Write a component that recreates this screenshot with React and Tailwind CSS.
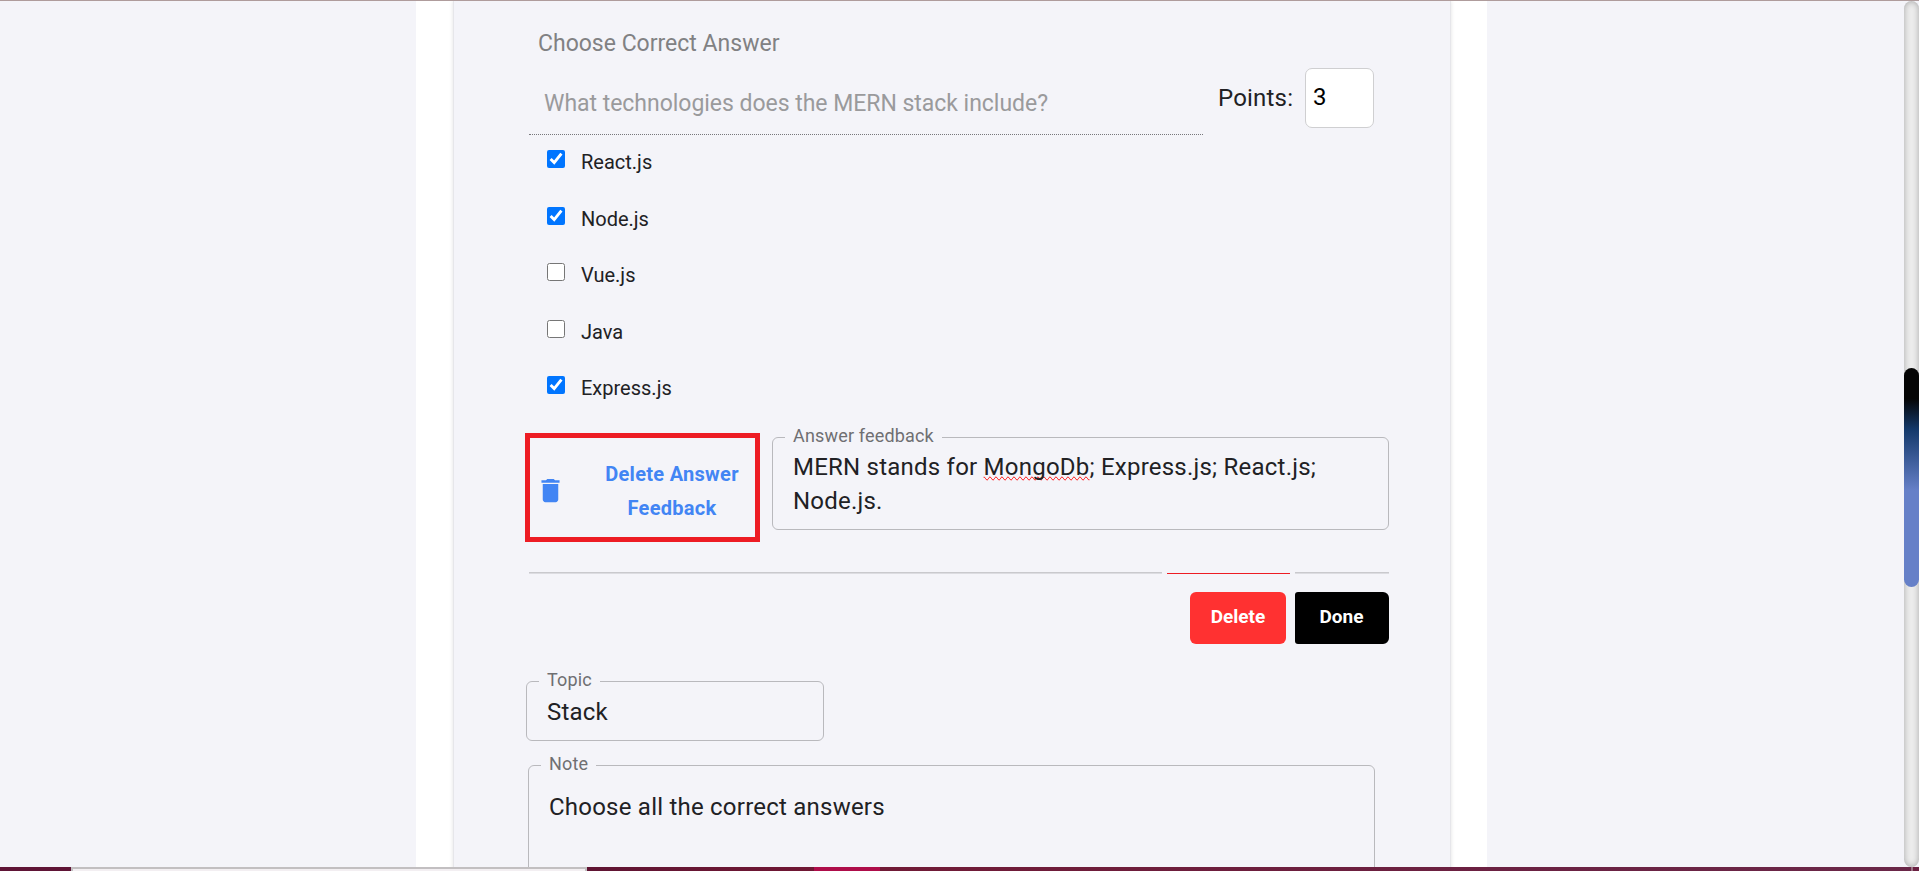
import React from "react";

const options = [
  { label: "React.js", checked: true },
  { label: "Node.js", checked: true },
  { label: "Vue.js", checked: false },
  { label: "Java", checked: false },
  { label: "Express.js", checked: true },
];

function Outlined({ label, legendClass, className, children }) {
  return (
    <fieldset className={`min-w-0 rounded-[6px] border border-[#b9b9bd] text-[24px] leading-[34px] tracking-[0.225px] text-[#212124] ${className}`}>
      <legend className={`h-[25px] text-[18px] leading-[22px] tracking-[0.17px] text-[#6f6f72] ${legendClass}`}>{label}</legend>
      {children}
    </fieldset>
  );
}

function TrashIcon() {
  return (
    <svg viewBox="0 0 24 24" className="mt-[9px] h-[31px] w-[31px] shrink-0 fill-[#4285f4]">
      <path d="M6 19c0 1.100.9 2 2 2h8c1.100 0 2-.9 2-2V7H6v12zM19 4h-3.500l-1-1h-5l-1 1H5v2h14V4z" />
    </svg>
  );
}

export default function App() {
  return (
    <div className="flex h-[871px] w-[1919px] flex-col overflow-hidden bg-[#f4f4f9] font-[Roboto,sans-serif]">
      <div className="h-px shrink-0 bg-[#af9c9c]" />
      <div className="flex h-[866px] shrink-0 overflow-hidden">
        <div className="w-[416px] shrink-0" />
        <main className="h-[866px] w-[1071px] shrink-0 bg-white pl-[37px]">
          <section className="h-[900px] w-[998px] border-x border-[#e6e6ea] bg-[#f4f4f9] shadow-[0_0_4px_rgba(0,0,0,0.12)]">
            <h2 className="ml-[84px] pt-[29px] text-[23px] leading-[28px] text-[#818183]">Choose Correct Answer</h2>

            <div className="ml-[75px] mt-[10px] flex h-[67px]">
              <div className="h-[67px] w-[674px] border-b border-dotted border-[#77777b] pl-[15px] pt-[22px] text-[23px] leading-[28px] tracking-[-0.03px] text-[#9a9a9c]">
                What technologies does the MERN stack include?
              </div>
              <label className="ml-[15px] w-[87px] whitespace-nowrap pt-[16px] text-[24px] leading-[28px] tracking-[0.2px] text-[#212124]">Points:</label>
              <div className="h-[60px] w-[69px] rounded-[7px] border border-[#cfcfd1] bg-white pl-[7px] pt-[14px] text-[24px] leading-[28px] text-black">3</div>
            </div>

            <div className="ml-[93px] mt-[15px] flex h-[283px] flex-col">
              {options.map((o) => (
                <label key={o.label} className="flex h-[56.5px] items-start text-[20px] leading-[24px] text-[#212124]">
                  <input type="checkbox" defaultChecked={o.checked} className="m-0 h-[18px] w-[18px] shrink-0" />
                  <span className="ml-[16px]">{o.label}</span>
                </label>
              ))}
            </div>

            <div className="ml-[71px] -mt-[8px] flex">
              <button className="mt-[8px] flex h-[109px] w-[235px] border-[5px] border-[#ed1c24] pl-[5px] pt-[28px] text-[20px] font-bold leading-[34px] text-[#4285f4]">
                <TrashIcon />
                <span className="-mt-[9px] ml-[29px] w-[154px] text-center tracking-[0.28px]">Delete Answer Feedback</span>
              </button>
              <Outlined label="Answer feedback" legendClass="ml-[12px] px-[8px]" className="ml-[12px] h-[105px] w-[617px]">
                <p className="ml-[20px] w-[540px]">
                  MERN stands for <span className="[text-decoration-line:spelling-error]">MongoDb</span>; Express.js; React.js;
                  <br />
                  Node.js.
                </p>
              </Outlined>
            </div>

            <div className="ml-[75px] mt-[30px] flex h-[2px] items-end">
              <div className="h-[2px] w-[633px] border-t border-[#c9c9cd] bg-[#dcdce1]" />
              <div className="ml-[5px] h-px w-[123px] bg-[#ed1c24]" />
              <div className="ml-[5px] h-[2px] w-[94px] border-t border-[#c9c9cd] bg-[#dcdce1]" />
            </div>

            <div className="ml-[736px] mt-[18px] flex gap-[9px] text-[19px] font-bold leading-[24px] text-white">
              <button className="h-[52px] w-[96px] rounded-[6px] bg-[#ff3131] pb-[2px]">Delete</button>
              <button className="h-[52px] w-[94px] rounded-l-[3px] rounded-r-[6px] bg-black pb-[2px] pr-px">Done</button>
            </div>

            <Outlined label="Topic" legendClass="ml-[12px] px-[8px]" className="ml-[72px] mt-[25px] h-[72px] w-[298px]">
              <p className="ml-[20px] pt-px">Stack</p>
            </Outlined>
            <Outlined label="Note" legendClass="ml-[12px] px-[8px]" className="ml-[74px] mt-[12px] h-[130px] w-[847px]">
              <p className="ml-[20px] pt-[12px]">Choose all the correct answers</p>
            </Outlined>
          </section>
        </main>
        <div className="flex-1" />
        <div className="h-[866px] w-[15px] shrink-0 rounded-[8px] bg-[#ececec] pt-[367px] shadow-[inset_0_0_6px_rgba(0,0,0,0.3)]">
          <div className="h-[219px] w-[15px] rounded-[8px] bg-[linear-gradient(180deg,#050505_0%,#050505_14%,#14396b_28%,#6680c8_56%,#6680c8_100%)]" />
        </div>
      </div>
      <div className="flex h-[4px] shrink-0 bg-[#6b2142]">
        <div className="w-[71px] bg-[#5f1436]" />
        <div className="w-[516px] border-x-2 border-t-2 border-[#c2bfc1] bg-[#f3eff2]" />
        <div className="w-[227px] bg-[linear-gradient(90deg,#5f1433,#701734)]" />
        <div className="w-[66px] bg-[#ae0d4a]" />
        <div className="w-[1031px] bg-[linear-gradient(90deg,#701a36,#6b2142_60%,#6a2748)]" />
        <div className="w-[2px] bg-[#9c7486]" />
      </div>
    </div>
  );
}
